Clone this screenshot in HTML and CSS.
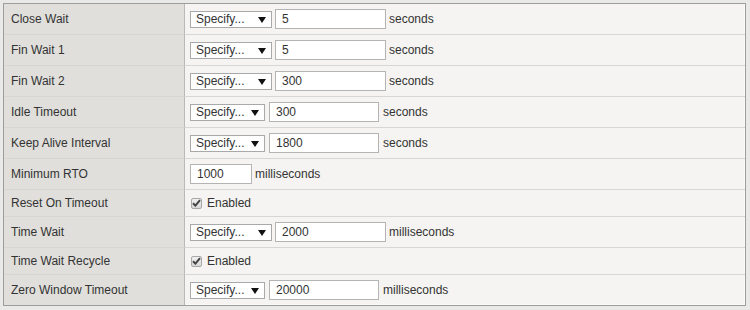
FILE: index.html
```html
<!DOCTYPE html>
<html>
<head>
    <title>TCP Profile Settings</title>
    <meta charset="UTF-8">
    <link rel="stylesheet" href="styles.css">
</head>
<body>
    <div class="props">
        <div class="label">Close Wait</div>
        <div class="value">
            <span class="select"><select><option>Specify...</option></select><span class="arrow"></span></span>
            <input class="num" type="text" value="5">
            <span class="unit">seconds</span>
        </div>

        <div class="label">Fin Wait 1</div>
        <div class="value">
            <span class="select"><select><option>Specify...</option></select><span class="arrow"></span></span>
            <input class="num" type="text" value="5">
            <span class="unit">seconds</span>
        </div>

        <div class="label">Fin Wait 2</div>
        <div class="value">
            <span class="select"><select><option>Specify...</option></select><span class="arrow"></span></span>
            <input class="num" type="text" value="300">
            <span class="unit">seconds</span>
        </div>

        <div class="label">Idle Timeout</div>
        <div class="value narrow">
            <span class="select"><select><option>Specify...</option></select><span class="arrow"></span></span>
            <input class="num" type="text" value="300">
            <span class="unit">seconds</span>
        </div>

        <div class="label">Keep Alive Interval</div>
        <div class="value narrow">
            <span class="select"><select><option>Specify...</option></select><span class="arrow"></span></span>
            <input class="num" type="text" value="1800">
            <span class="unit">seconds</span>
        </div>

        <div class="label">Minimum RTO</div>
        <div class="value">
            <input class="num short" type="text" value="1000">
            <span class="unit">milliseconds</span>
        </div>

        <div class="label small">Reset On Timeout</div>
        <div class="value small">
            <span class="check"><svg width="9" height="8" viewBox="0 0 9 8"><path d="M1 4.2 L3.4 6.6 L8 1.2" fill="none" stroke="#444" stroke-width="2"/></svg></span>
            <span class="check-text">Enabled</span>
        </div>

        <div class="label">Time Wait</div>
        <div class="value">
            <span class="select"><select><option>Specify...</option></select><span class="arrow"></span></span>
            <input class="num" type="text" value="2000">
            <span class="unit">milliseconds</span>
        </div>

        <div class="label small">Time Wait Recycle</div>
        <div class="value small">
            <span class="check"><svg width="9" height="8" viewBox="0 0 9 8"><path d="M1 4.2 L3.4 6.6 L8 1.2" fill="none" stroke="#444" stroke-width="2"/></svg></span>
            <span class="check-text">Enabled</span>
        </div>

        <div class="label last">Zero Window Timeout</div>
        <div class="value narrow last">
            <span class="select"><select><option>Specify...</option></select><span class="arrow"></span></span>
            <input class="num" type="text" value="20000">
            <span class="unit">milliseconds</span>
        </div>
    </div>
</body>
</html>
```

FILE: styles.css
```css
body {
    margin: 0;
    padding: 3px 4px 0 3px;
    background: #e9e9e7;
    font-family: 'Liberation Sans', Arial, sans-serif;
    font-size: 12px;
    color: #333;
}

.props {
    display: grid;
    grid-template-columns: 181px 1fr;
    border: 1px solid #9d9d9b;
    box-shadow: inset -1px -1px 0 #fbfbfa;
    background: #f5f4f2;
}

.label,
.value {
    height: 31px;
    box-sizing: border-box;
    display: flex;
    align-items: center;
    border-bottom: 1px solid #d6d6d4;
}

.label {
    padding-left: 7px;
    background: #e0dfdb;
    border-right: 1px solid #b9b9b7;
}

.value {
    padding-left: 5px;
    gap: 3px;
}

.label.small,
.value.small {
    height: 27px;
}

.label.last,
.value.last {
    height: 30px;
    border-bottom: none;
}

.select {
    position: relative;
    display: inline-block;
}

.select select {
    appearance: none;
    -webkit-appearance: none;
    width: 82px;
    height: 17px;
    margin: 0;
    padding: 0 0 0 5px;
    border: 1px solid #a9a9a9;
    border-radius: 0;
    background: #fff;
    font-family: inherit;
    font-size: 12px;
    color: #333;
}

.arrow {
    position: absolute;
    right: 6px;
    top: 6px;
    width: 0;
    height: 0;
    border-left: 4px solid transparent;
    border-right: 4px solid transparent;
    border-top: 6px solid #111;
}

.num {
    width: 111px;
    height: 20px;
    box-sizing: border-box;
    margin: 0;
    padding: 0 0 0 6px;
    border: 1px solid #b4b4b4;
    background: #fff;
    font-family: inherit;
    font-size: 12px;
    color: #333;
}

.num.short {
    width: 62px;
}

.narrow .select select {
    width: 75px;
}

.narrow .num {
    width: 110px;
}

.narrow {
    gap: 4px;
}

.check {
    width: 11px;
    height: 11px;
    box-sizing: border-box;
    margin-left: 1px;
    border: 1px solid #a8a8a8;
    border-radius: 2px;
    background: linear-gradient(#f0f0f0, #d8d8d8);
    display: flex;
    align-items: center;
    justify-content: center;
}

.check-text {
    margin-left: 2px;
}
```
